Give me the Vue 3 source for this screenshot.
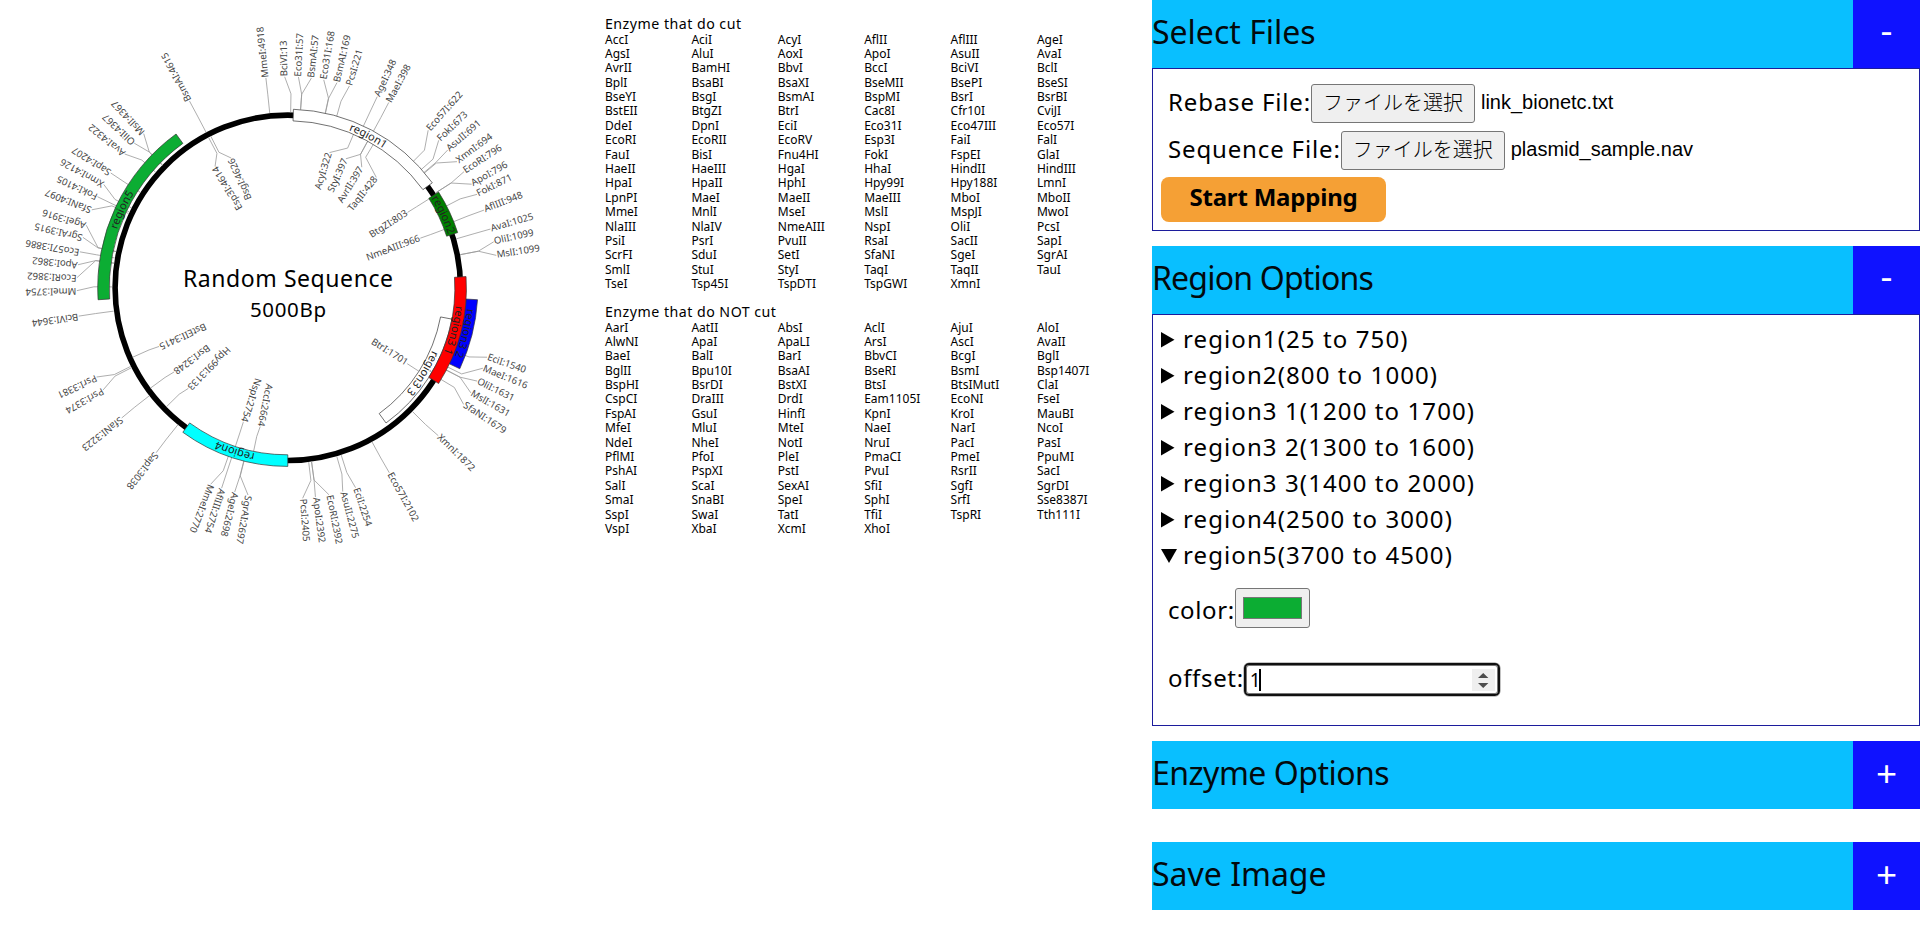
<script setup>
import { ref } from 'vue'

const CX = 287.8
const CY = 287.8
const LENGTH = 5000

const polar = (deg, r) => {
  const a = (deg * Math.PI) / 180
  return [CX + r * Math.sin(a), CY - r * Math.cos(a)]
}
const fmt = ([x, y]) => `${x.toFixed(2)},${y.toFixed(2)}`
const toDeg = (bp) => (bp / LENGTH) * 360

// name, first bp, last bp, fill, track offset
const regions = [
  ['region1', 25, 750, '#ffffff', 0],
  ['region2', 800, 1000, '#008000', 0],
  ['region3 3', 1400, 2000, '#ffffff', -1],
  ['region3 2', 1300, 1600, '#0000ff', 1],
  ['region3 1', 1200, 1700, '#ff0000', 0],
  ['region4', 2500, 3000, '#00ffff', 0],
  ['region5', 3700, 4500, '#0cad33', 1],
].map(([name, from, to, fill, offset], i) => {
  const a = toDeg(from)
  const b = toDeg(to)
  const inner = 167 + offset * 11.5
  const outer = inner + 11.6
  const base = inner + 2
  return {
    id: `arc${i}`,
    name,
    fill,
    shape: `M${fmt(polar(a, inner))} L${fmt(polar(a, outer))} A${outer},${outer} 0 0 1 ${fmt(polar(b, outer))} L${fmt(polar(b, inner))} A${inner},${inner} 0 0 0 ${fmt(polar(a, inner))}Z`,
    arc: `M${fmt(polar(a - 6, base))} A${base},${base} 0 0 1 ${fmt(polar(b + 6, base))}`,
  }
})

// enzyme, cut position, end point of the leader line
const outerSites = [
  ['BciVI', 13, 284.7, 77], ['Eco31I', 57, 298.5, 76], ['BsmAI', 57, 311.5, 77],
  ['Eco31I', 168, 324, 78.5], ['BsmAI', 169, 337.5, 80.5], ['PcsI', 221, 350, 84],
  ['AgeI', 348, 378, 95], ['MaeI', 398, 389.7, 100.7], ['Eco57I', 622, 427.5, 131],
  ['FokI', 673, 439, 140], ['AsuII', 691, 448.3, 149.5], ['XmnI', 694, 456.5, 162],
  ['EcoRI', 796, 463.5, 172], ['ApoI', 796, 472, 184], ['FokI', 871, 477.7, 194],
  ['AflIII', 948, 485.5, 209.5], ['AvaI', 1025, 492.3, 228.5], ['OliI', 1099, 495, 241.5],
  ['MslI', 1099, 496.7, 255.3], ['EciI', 1540, 489.3, 358], ['MaeI', 1616, 484, 368.7],
  ['OliI', 1631, 478, 381.5], ['MslI', 1631, 472, 393.5], ['SfaNI', 1679, 464.5, 405],
  ['XmnI', 1872, 439.3, 436.7], ['Eco57I', 2102, 390, 474], ['EciI', 2254, 356, 489],
  ['AsuII', 2275, 343, 492.5], ['EcoRI', 2392, 329, 495], ['ApoI', 2392, 315.7, 499],
  ['PcsI', 2405, 302.7, 499], ['SgrAI', 2697, 248, 495], ['AgeI', 2698, 234.3, 493.5],
  ['AflIII', 2754, 221, 490], ['MmeI', 2770, 210, 486], ['SapI', 3038, 155.7, 453.3],
  ['SfaNI', 3223, 121.3, 418.3], ['PsrI', 3374, 101.7, 390.7], ['PsrI', 3381, 96, 377.3],
  ['BciVI', 3644, 77.5, 316.3], ['MmeI', 3754, 75, 290.7], ['EcoRI', 3862, 75.5, 277.5],
  ['ApoI', 3862, 76, 264.5], ['Eco57I', 3886, 78, 251.5], ['SgrAI', 3915, 81.5, 237],
  ['AgeI', 3916, 85.5, 225], ['SfaNI', 4097, 91, 209.5], ['FokI', 4105, 96, 196],
  ['XmnI', 4126, 102, 183.5], ['SapI', 4207, 110, 172.5], ['AvaI', 4322, 124.7, 154],
  ['OliI', 4367, 133, 142], ['MslI', 4367, 144.5, 134.5], ['BsmAI', 4615, 188.7, 99.5],
  ['MmeI', 4918, 265.7, 76],
]
const innerSites = [
  ['AcyI', 322, 330, 151], ['StyI', 397, 346.7, 157], ['AvrII', 397, 362.5, 166],
  ['TaqII', 428, 377, 176.5], ['BtgZI', 803, 405, 214], ['NmeAIII', 966, 417.3, 239.3],
  ['BtrI', 1701, 405, 362.3], ['AccI', 2664, 260.7, 424], ['NspI', 2754, 244, 420],
  ['Hpy99I', 3133, 191, 385.7], ['BsrI', 3248, 176.7, 370], ['BstEII', 3415, 162.3, 345],
  ['Esp3I', 4614, 214.5, 165.5], ['BsgI', 4626, 231, 157.5],
]

const place = (rStart, rBend, rEnd, rText, anchor) => ([name, bp, x, y]) => {
  const slot = (Math.atan2(x - CX, CY - y) * 180) / Math.PI
  const deg = toDeg(bp)
  return {
    text: `${name}:${bp}`,
    anchor,
    points: [polar(deg, rStart), polar(deg, rBend), polar(slot, rEnd)].map(fmt).join(' '),
    transform: `translate(${fmt(polar(slot, rText))}) rotate(${(slot - 90).toFixed(2)})`,
  }
}
const sites = [
  ...outerSites.map(place(175.6, 194, 211, 211.5, 'start')),
  ...innerSites.map(place(170, 152, 141.5, 141, 'end')),
]

const cutters = `AccI AciI AcyI AflII AflIII AgeI AgsI AluI AoxI ApoI AsuII AvaI AvrII BamHI BbvI BccI BciVI BclI
BplI BsaBI BsaXI BseMII BsePI BseSI BseYI BsgI BsmAI BspMI BsrI BsrBI BstEII BtgZI BtrI Cac8I Cfr10I CviJI
DdeI DpnI EciI Eco31I Eco47III Eco57I EcoRI EcoRII EcoRV Esp3I FaiI FalI FauI BisI Fnu4HI FokI FspEI GlaI
HaeII HaeIII HgaI HhaI HindII HindIII HpaI HpaII HphI Hpy99I Hpy188I LmnI LpnPI MaeI MaeII MaeIII MboI MboII
MmeI MnlI MseI MslI MspJI MwoI NlaIII NlaIV NmeAIII NspI OliI PcsI PsiI PsrI PvuII RsaI SacII SapI
ScrFI SduI SetI SfaNI SgeI SgrAI SmlI StuI StyI TaqI TaqII TauI TseI Tsp45I TspDTI TspGWI XmnI`.split(/\s+/)
const nonCutters = `AarI AatII AbsI AclI AjuI AloI AlwNI ApaI ApaLI ArsI AscI AvaII BaeI BalI BarI BbvCI BcgI BglI
BglII Bpu10I BsaAI BseRI BsmI Bsp1407I BspHI BsrDI BstXI BtsI BtsIMutI ClaI CspCI DraIII DrdI Eam1105I EcoNI FseI
FspAI GsuI HinfI KpnI KroI MauBI MfeI MluI MteI NaeI NarI NcoI NdeI NheI NotI NruI PacI PasI
PflMI PfoI PleI PmaCI PmeI PpuMI PshAI PspXI PstI PvuI RsrII SacI SalI ScaI SexAI SfiI SgfI SgrDI
SmaI SnaBI SpeI SphI SrfI Sse8387I SspI SwaI TatI TfiI TspRI Tth111I VspI XbaI XcmI XhoI`.split(/\s+/)
const lists = [
  { title: 'Enzyme that do cut', names: cutters },
  { title: 'Enzyme that do NOT cut', names: nonCutters },
]

const regionItems = [
  'region1(25 to 750)',
  'region2(800 to 1000)',
  'region3 1(1200 to 1700)',
  'region3 2(1300 to 1600)',
  'region3 3(1400 to 2000)',
  'region4(2500 to 3000)',
  'region5(3700 to 4500)',
]
const openItem = ref(6)
</script>

<template>
  <div class="page">
    <svg class="map" width="576" height="576" viewBox="0 0 576 576">
      <circle :cx="CX" :cy="CY" r="172.7" fill="none" stroke="#000" stroke-width="5.6" />
      <polyline v-for="(s, i) in sites" :key="'l' + i" :points="s.points" class="leader" />
      <g v-for="r in regions" :key="r.id">
        <path :d="r.shape" :fill="r.fill" class="region" />
        <path :id="r.id" :d="r.arc" fill="none" />
      </g>
      <text v-for="r in regions" :key="'t' + r.id" class="region-name">
        <textPath :href="'#' + r.id" startOffset="50%" text-anchor="middle">{{ r.name }}</textPath>
      </text>
      <text
        v-for="(s, i) in sites"
        :key="'s' + i"
        :transform="s.transform"
        :text-anchor="s.anchor"
        y="2.6"
        class="site"
      >{{ s.text }}</text>
      <text x="183" y="287.3" textLength="210" class="title">Random Sequence</text>
      <text x="250" y="316.7" textLength="76" class="length">5000Bp</text>
    </svg>

    <div class="lists">
      <section v-for="l in lists" :key="l.title" class="list">
        <h2>{{ l.title }}</h2>
        <div class="names">
          <span v-for="n in l.names" :key="n">{{ n }}</span>
        </div>
      </section>
    </div>

    <div class="panel">
      <section class="files">
        <header class="bar">
          <span class="bar-title">Select Files</span><button class="toggle minus">-</button>
        </header>
        <div class="box files-box">
          <div class="file-row">
            <span class="label">Rebase File:</span>
            <button class="pick">ファイルを選択</button>
            <span class="filename">link_bionetc.txt</span>
          </div>
          <div class="file-row">
            <span class="label">Sequence File:</span>
            <button class="pick">ファイルを選択</button>
            <span class="filename">plasmid_sample.nav</span>
          </div>
          <button class="start">Start Mapping</button>
        </div>
      </section>

      <section class="region-options">
        <header class="bar">
          <span class="bar-title tight">Region Options</span><button class="toggle minus">-</button>
        </header>
        <div class="box region-box">
          <div v-for="(item, i) in regionItems" :key="item" class="item" @click="openItem = i">
            <svg class="marker" width="16" height="16" viewBox="0 0 16 16">
              <path v-if="i === openItem" d="M0 1H16L8 15Z" />
              <path v-else d="M0 0V15.5L13.5 7.75Z" />
            </svg>
            <span>{{ item }}</span>
          </div>
          <div class="field color-field">
            <span class="label">color:</span>
            <span class="color-input"><span class="swatch"></span></span>
          </div>
          <div class="field offset-field">
            <span class="label">offset:</span>
            <span class="number">
              <span class="value">1</span><span class="caret"></span>
              <svg class="spin" width="23" height="22" viewBox="0 0 23 22">
                <path d="M0 0H23V22H0Z" fill="#efefef" />
                <path d="M6 9L11.2 4L16.4 9ZM6 14L11.2 19L16.4 14Z" fill="#4d4d4d" />
              </svg>
            </span>
          </div>
        </div>
      </section>

      <header class="bar enzyme-bar">
        <span class="bar-title semi">Enzyme Options</span><button class="toggle">+</button>
      </header>
      <header class="bar save-bar">
        <span class="bar-title">Save Image</span><button class="toggle">+</button>
      </header>
    </div>
  </div>
</template>

<style>
body {
  margin: 0;
  background: #fff;
}
</style>

<style scoped>
.page {
  display: flex;
  width: 1920px;
  height: 926px;
  overflow: hidden;
  font-family: 'Noto Sans', 'Noto Sans CJK JP', sans-serif;
  color: #000;
}
.map {
  flex: none;
}
.leader {
  fill: none;
  stroke: #999;
  stroke-width: 0.8;
}
.region {
  stroke: #333;
  stroke-width: 0.7;
}
.region-name {
  font-size: 11px;
  fill: #222;
}
.site {
  font-size: 9.6px;
  fill: #444;
}
.title {
  font-size: 23px;
}
.length {
  font-size: 20.5px;
}
.lists {
  flex: none;
  width: 547px;
  padding: 15px 0 0 29px;
  box-sizing: content-box;
}
.list {
  height: 288px;
}
.list h2 {
  margin: 0;
  height: 17.5px;
  font-size: 14.2px;
  font-weight: 400;
  line-height: 18px;
  letter-spacing: 0.48px;
}
.names {
  display: grid;
  grid-template-columns: repeat(6, 86.4px);
  grid-auto-rows: 14.4px;
  font-size: 12px;
  line-height: 14.4px;
}
.panel {
  width: 768px;
  flex: none;
}
.bar {
  display: flex;
  height: 68px;
  background: #09bfff;
}
.bar-title {
  flex: 1;
  font-size: 32px;
  line-height: 63px;
  color: #030a0d;
}
.tight {
  letter-spacing: -0.8px;
}
.semi {
  letter-spacing: -0.5px;
}
button {
  box-sizing: border-box;
  font-family: inherit;
  padding: 0;
  margin: 0;
  color: #000;
}
.toggle {
  width: 67px;
  height: 68px;
  padding-bottom: 4px;
  border: 0;
  background: #0f12ff;
  color: #fff;
  font-size: 37px;
  line-height: 50px;
}
.toggle.minus {
  padding-bottom: 11px;
}
.box {
  border: 1px solid #1c1c9c;
  box-sizing: border-box;
}
.files-box {
  height: 163px;
  padding: 15px 0 0 8px;
}
.file-row {
  display: flex;
  height: 39px;
  margin: 0 0 8px 7px;
}
.label {
  font-size: 24px;
  line-height: 35px;
  letter-spacing: 0.85px;
}
.pick {
  width: 164px;
  height: 39px;
  padding-bottom: 3px;
  border: 1px solid #767676;
  border-radius: 3px;
  background: #efefef;
  font-family: 'Noto Sans CJK JP', sans-serif;
  font-size: 20px;
  font-weight: 300;
  line-height: 32px;
}
.filename {
  margin-left: 6px;
  font-family: 'Liberation Sans', Arial, sans-serif;
  font-size: 20px;
  line-height: 37px;
}
.start {
  display: block;
  width: 225px;
  height: 45px;
  margin-top: -1px;
  padding-bottom: 5px;
  border: 0;
  border-radius: 8px;
  background: #f5a035;
  font-size: 24px;
  font-weight: 700;
  line-height: 36px;
  letter-spacing: -0.2px;
}
.region-options {
  margin-top: 15px;
}
.region-box {
  height: 412px;
  padding: 6px 0 0 8px;
}
.item {
  display: flex;
  align-items: center;
  height: 36px;
  font-size: 24px;
  line-height: 36px;
  letter-spacing: 1.1px;
}
.item span {
  margin-top: -1px;
}
.marker {
  margin: 1px 6px 0 0;
}
.field {
  display: flex;
  margin-left: 7px;
}
.color-field {
  margin-top: 15px;
}
.color-field .label {
  padding-top: 4px;
  letter-spacing: 0.6px;
}
.color-input {
  display: block;
  box-sizing: border-box;
  width: 75px;
  height: 40px;
  padding: 8px 7px;
  border: 1px solid #767676;
  border-radius: 3px;
  background: #efefef;
}
.swatch {
  display: block;
  box-sizing: border-box;
  height: 22px;
  border: 1px solid #777;
  background: #0cad33;
}
.offset-field {
  margin-top: 35px;
}
.offset-field .label {
  letter-spacing: 0.65px;
  margin-top: -3px;
}
.number {
  display: flex;
  align-items: center;
  box-sizing: border-box;
  width: 256px;
  height: 33px;
  padding: 0 3px 0 4px;
  border: 2px solid #101010;
  border-radius: 5px;
  box-shadow: inset 0 0 0 1px #767676, 0 0 0 0.5px #888;
}
.value {
  font-size: 19px;
  line-height: 24px;
  letter-spacing: -1.5px;
}
.caret {
  width: 1.5px;
  height: 22px;
  background: #000;
}
.spin {
  margin-left: auto;
}
.enzyme-bar {
  margin-top: 15px;
}
.save-bar {
  margin-top: 33px;
}
</style>
